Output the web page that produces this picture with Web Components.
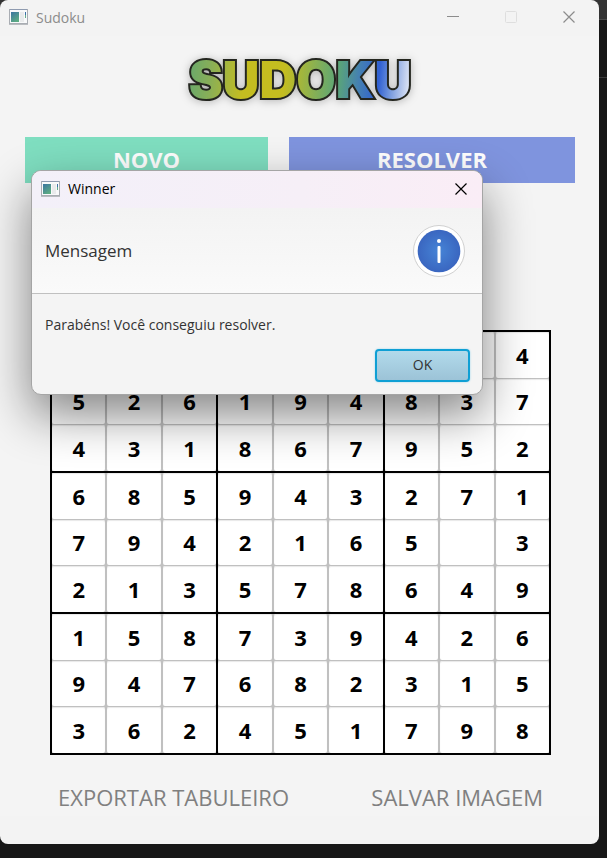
<!DOCTYPE html>
<html lang="pt-BR">
<head>
<meta charset="utf-8">
<title>Sudoku</title>
<style>
html{min-height:100%;background:linear-gradient(#333 0 19px,#4a4a4a 19px 20px,#171717 20px 77px,#3a3a3a 77px 78px,#171717 78px)}
body{margin:0;padding:0 8px 14px 0;font-family:"Open Sans","Noto Sans",sans-serif}
</style>
</head>
<body>
<sudoku-app></sudoku-app>
<script>
const define = (name, html, setup) => {
  const template = document.createElement('template');
  template.innerHTML = html;
  customElements.define(name, class extends HTMLElement {
    constructor() {
      super();
      this.attachShadow({mode: 'open'}).append(template.content.cloneNode(true));
    }
    connectedCallback() { if (setup) setup(this, this.shadowRoot); }
  });
};

define('app-icon', `
<style>:host{display:block;width:19px;height:16px;flex:none}svg{display:block}</style>
<svg width="19" height="16" viewBox="0 0 19 16" aria-hidden="true">
  <defs><linearGradient id="g" x2=".6" y2="1"><stop stop-color="#3b74a0"/><stop offset="1" stop-color="#5cab83"/></linearGradient></defs>
  <rect x=".5" y=".5" width="18" height="14" fill="#f8f9fa" stroke="#a9adb3"/>
  <path d="M0 15.5h19" stroke="#b9bcc0"/><path d="M1 .5h17" stroke="#8f9bb0"/>
  <rect x="2" y="3" width="8" height="10" fill="url(#g)"/>
  <path d="M11 3h4v10h-4z" fill="#e9ebec"/>
  <path d="M16.5 3v3" stroke="#3d70a8"/><path d="M16.5 6v3" stroke="#63ad8c"/>
</svg>`);

define('title-bar', `
<style>
:host{display:flex;align-items:center;height:34px;padding:0 0 2px 9px;font-size:14px;color:#8c8c8c}
.title{flex:1;margin-left:8px}
button{width:46px;height:34px;padding:0;border:0;background:none;color:inherit;display:grid;place-items:center}
.controls{display:flex;gap:12px;padding-right:7px}
:host([dialog]){height:35px;color:#000;background:linear-gradient(90deg,#f3f0f9,#f6eff7 60%,#faedf6)}
:host([dialog]) .window-only{display:none}
:host([dialog]) .controls{padding-right:0}
:host([dialog]) button{width:42px}
</style>
<app-icon></app-icon><span class="title"><slot></slot></span>
<div class="controls">
<button class="window-only" aria-label="Minimizar"><svg width="12" height="12"><path d="M0 5.5h12" stroke="currentColor"/></svg></button>
<button class="window-only" aria-label="Maximizar" disabled><svg width="12" height="12"><rect x=".5" y=".5" width="11" height="11" rx="1" fill="none" stroke="#dedede"/></svg></button>
<button aria-label="Fechar"><svg width="12" height="12"><path d="M.5.5l11 11M11.5.5l-11 11" stroke="currentColor" stroke-width="1.2"/></svg></button>
</div>`);

define('sudoku-logo', `
<style>:host{display:flex;justify-content:center}svg{display:block;overflow:visible;filter:drop-shadow(0 1px 4px rgba(0,0,0,.25))}
text{font:900 51px Inter,"Open Sans",sans-serif;paint-order:stroke}</style>
<svg width="228" height="50" viewBox="0 0 228 50" role="img" aria-label="Sudoku">
<defs><linearGradient id="fill" gradientUnits="userSpaceOnUse" x1="2" y1="10" x2="226" y2="30">
<stop stop-color="#67a86c"/><stop offset=".1" stop-color="#87ae58"/><stop offset=".25" stop-color="#c4bd20"/><stop offset=".43" stop-color="#c4bd20"/><stop offset=".58" stop-color="#82af58"/><stop offset=".67" stop-color="#5aa578"/><stop offset=".76" stop-color="#4581b0"/><stop offset=".85" stop-color="#3060d2"/><stop offset=".9" stop-color="#6f94dc"/><stop offset="1" stop-color="#eceff8"/>
</linearGradient></defs>
<text x="114" y="43" text-anchor="middle" fill="url(#fill)" stroke="#24261f" stroke-width="4">SUDOKU</text>
</svg>`);

define('action-button', `
<style>
:host{display:block;min-width:0}
button{display:block;width:100%;height:46px;padding:0 0 2px;border:0;font:bold 22px/44px "Open Sans","Noto Sans",sans-serif;color:#fff;background:var(--tone);white-space:nowrap}
:host([plain]) button{height:36px;font-weight:400;line-height:34px;color:#808080;background:none}
</style><button><slot></slot></button>`);

define('sudoku-board', `
<style>
:host{display:grid;grid-template-columns:repeat(3,minmax(0,1fr));gap:2px;border:2px solid #000;background:#000}
.block{display:grid;grid-template:repeat(3,1fr)/repeat(3,minmax(0,1fr));height:139px;gap:1px 2px;background:#c0c0c0}
input{box-sizing:border-box;width:100%;height:100%;min-width:0;margin:0;padding:0;border:0;border-radius:2px;background:#fff;box-shadow:inset 0 1px 1px #e8e8e8;text-align:center;font:bold 22px "Open Sans","Noto Sans",sans-serif;color:#000;outline:0}
</style>`, (host, root) => {
  if (root.querySelector('.block')) return;
  const rows = host.getAttribute('rows').split(' ');
  for (let b = 0; b < 9; b++) {
    const block = document.createElement('div');
    block.className = 'block';
    for (let c = 0; c < 9; c++) {
      const y = Math.floor(b / 3) * 3 + Math.floor(c / 3), x = b % 3 * 3 + c % 3;
      const input = document.createElement('input');
      input.maxLength = 1;
      input.value = rows[y][x].replace('.', '');
      input.setAttribute('aria-label', `Linha ${y + 1}, coluna ${x + 1}`);
      block.append(input);
    }
    root.append(block);
  }
});

define('message-dialog', `
<style>
:host{display:block;box-sizing:border-box;border:1px solid #a5a5a5;border-radius:10px;overflow:hidden;background:#f4f4f4;color:#333;box-shadow:0 20px 48px rgba(0,0,0,.48)}
header{display:flex;align-items:center;justify-content:space-between;height:85px;padding:0 16px 0 13px;border-bottom:1px solid #c0c0c0;background:linear-gradient(#f3f3f3,#fafafa);font-size:17px}
header svg{display:block}
.message{padding:20px 13px 0;font-size:14px;line-height:22px}
footer{display:flex;justify-content:flex-end;padding:13px 12px 12px}
footer button{width:95px;height:33px;border:2px solid #0f9fd4;border-radius:4px;background:linear-gradient(#b2daeb,#9cc3d7);box-shadow:0 0 2px #8fd0ea;font:14px "Open Sans","Noto Sans",sans-serif;color:#333;padding:0 0 2px}
</style>
<title-bar dialog><slot name="title"></slot></title-bar>
<header><slot name="heading"></slot>
<svg width="54" height="54" viewBox="0 0 54 54" aria-hidden="true"><defs><radialGradient id="b"><stop stop-color="#4684d6"/><stop offset="1" stop-color="#3a66c0"/></radialGradient></defs>
<circle cx="27" cy="27" r="25.5" fill="#fff" stroke="#d0d0d0"/><circle cx="27" cy="27" r="21.3" fill="url(#b)"/>
<circle cx="27" cy="17" r="2" fill="#fff"/><rect x="25.5" y="22" width="3" height="17" rx="1" fill="#fff"/></svg></header>
<div class="message"><slot></slot></div>
<footer><button>OK</button></footer>`);

define('sudoku-app', `
<style>
:host{display:block;position:relative;box-sizing:border-box;padding-bottom:28px;border-radius:8px;background:#f3f3f3}
main{background:#f4f4f4}
sudoku-logo{padding:19px 0 0}
.actions{display:grid;grid-template-columns:243fr 286fr;gap:21px;padding:32px 24px 0 25px}
.green{--tone:#7fdec0}.blue{--tone:#7f94de}
sudoku-board{margin:147px 48px 0 50px}
.exports{display:flex;justify-content:space-between;padding:25px 56px 0 58px}
message-dialog{position:absolute;top:170px;left:31px;width:calc(100% - 147px)}
</style>
<title-bar>Sudoku</title-bar>
<main>
<sudoku-logo></sudoku-logo>
<div class="actions"><action-button class="green">NOVO</action-button><action-button class="blue">RESOLVER</action-button></div>
<sudoku-board rows="978325614 526194837 431867952 685943271 7942165.3 213578649 158739426 947682315 362451798"></sudoku-board>
<div class="exports"><action-button plain>EXPORTAR TABULEIRO</action-button><action-button plain>SALVAR IMAGEM</action-button></div>
</main>
<message-dialog role="dialog" aria-label="Winner"><span slot="title">Winner</span><span slot="heading">Mensagem</span>Parabéns! Você conseguiu resolver.</message-dialog>`);
</script>
</body>
</html>
